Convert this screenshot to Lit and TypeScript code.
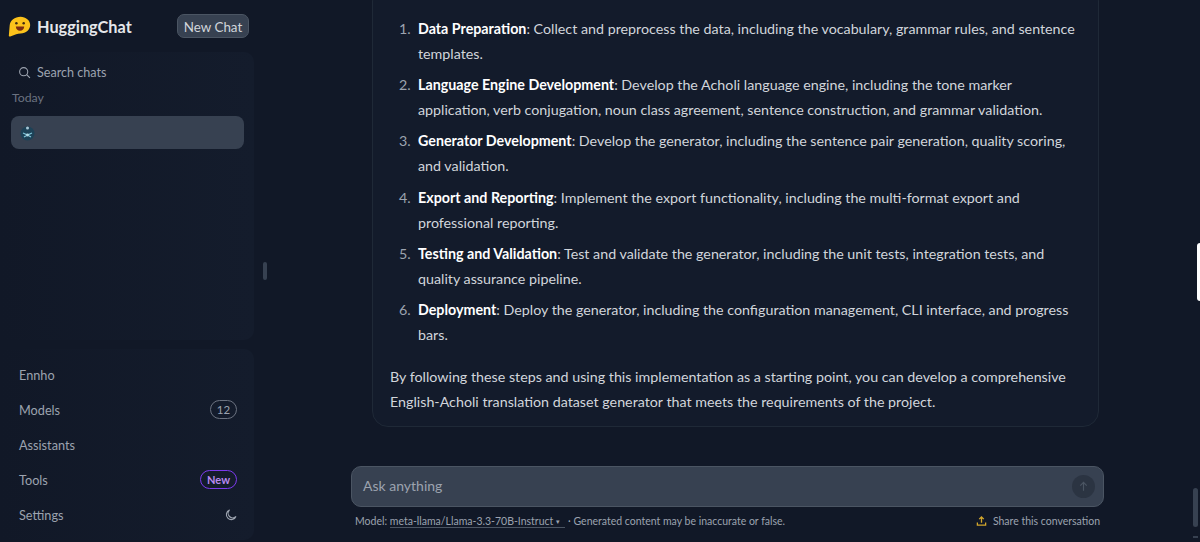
import { LitElement, html, css } from "lit";
import { customElement } from "lit/decorators.js";

const steps: [string, string][] = [
  ["Data Preparation", ": Collect and preprocess the data, including the vocabulary, grammar rules, and sentence templates."],
  ["Language Engine Development", ": Develop the Acholi language engine, including the tone marker application, verb conjugation, noun class agreement, sentence construction, and grammar validation."],
  ["Generator Development", ": Develop the generator, including the sentence pair generation, quality scoring, and validation."],
  ["Export and Reporting", ": Implement the export functionality, including the multi-format export and professional reporting."],
  ["Testing and Validation", ": Test and validate the generator, including the unit tests, integration tests, and quality assurance pipeline."],
  ["Deployment", ": Deploy the generator, including the configuration management, CLI interface, and progress bars."],
];

@customElement("app-root")
export class AppRoot extends LitElement {
  static styles = css`
    :host { display: block; width: 1200px; height: 542px; overflow: hidden; background: #111827; color: #d1d5db; font-family: "Lato", "Noto Sans", sans-serif; position: relative; }
    .app { display: grid; grid-template-columns: 263px 1fr; height: 542px; }
    .side { display: flex; flex-direction: column; padding: 0 9px 2px 0; min-width: 0; }
    .brand { height: 52px; display: flex; align-items: center; justify-content: space-between; padding: 0 5px 0 8px; flex: none; }
    .logo { display: flex; align-items: center; gap: 6px; font-size: 16.3px; font-weight: 700; color: #e5e7eb; }
    .newchat { background: #374151; border: 1px solid #4b5563; border-radius: 7px; color: #d1d5db; font-size: 13.4px; height: 24px; width: 72px; box-sizing: border-box; display: flex; align-items: center; justify-content: center; padding-top: 1px; }
    .panel { background: linear-gradient(90deg, #111827, #141c2c); border-radius: 10px; }
    .list { height: 288px; padding: 0 10px; flex: none; }
    .search { height: 40px; display: flex; align-items: center; gap: 6px; padding: 1px 0 0 8px; box-sizing: border-box; color: #9ca3af; font-size: 12.6px; }
    .today { font-size: 12.3px; color: #6b7280; height: 16px; line-height: 16px; margin: -2px 0 0 2px; }
    .chat { margin-top: 10px; margin-left: 1px; height: 33px; width: 233px; background: #374151; border-radius: 8px; display: flex; align-items: center; padding-left: 9px; box-sizing: border-box; }
    .nav { margin-top: 9px; flex: 1; padding: 8px 17px 5px 19px; display: flex; flex-direction: column; }
    .row { height: 35px; display: flex; align-items: center; justify-content: space-between; font-size: 12.7px; color: #9ca3af; }
    .count { border: 1px solid #6b7280; border-radius: 10px; height: 19px; width: 27px; box-sizing: border-box; display: flex; align-items: center; justify-content: center; font-size: 11.5px; color: #9ca3af; }
    .new { border: 1px solid #7c3aed; border-radius: 10px; height: 19px; width: 37px; box-sizing: border-box; display: flex; align-items: center; justify-content: center; font-size: 11px; font-weight: 700; color: #b88af0; }
    .main { display: flex; flex-direction: column; min-width: 0; }
    .scroll { height: 427px; overflow: hidden; display: flex; flex-direction: column; justify-content: flex-end; padding: 0 101px 0 109px; flex: none; }
    .msg { flex: none; border: 1px solid #1f2937; border-radius: 16px; background: #131b2b; padding: 30px 18px 0 17px; font-size: 14.27px; line-height: 25px; color: #d1d5db; }
    ol { margin: 0; padding: 0 0 0 28px; }
    li { margin: 0 0 6.2px; padding-left: 0; }
    li::marker { color: #9ca3af; content: counter(list-item) ".  "; }
    b { font-weight: 700; color: #fff; }
    p { margin: 17px 0 12px; }
    .input { margin: 39px 0 0 88px; width: 753px; height: 41px; box-sizing: border-box; background: #374151; border: 1px solid #4b5563; border-radius: 10px; display: flex; align-items: center; justify-content: space-between; padding: 0 8px 2px 11px; color: #9ca3af; font-size: 14px; flex: none; }
    .send { width: 23px; height: 23px; border-radius: 50%; background: #2b3442; display: flex; align-items: center; justify-content: center; margin-top: 2px; }
    .foot { margin: 7px 0 0 92px; width: 745px; display: flex; justify-content: space-between; align-items: center; font-size: 10.5px; color: #9ca3af; height: 14px; }
    .foot u { text-decoration: none; border-bottom: 1px solid #4b5563; }
    .caret { font-size: 7px; vertical-align: 1px; }
    .share { display: flex; align-items: center; gap: 6px; }
    .bar { position: absolute; right: 2px; top: 488px; width: 5px; height: 39px; border-radius: 3px; background: #374151; }
    .tick { position: absolute; right: 2px; top: 536px; width: 5px; height: 2px; background: #374151; }
    .edge { position: absolute; right: 0; top: 243px; width: 3px; height: 58px; background: #fff; border-radius: 3px 0 0 3px; }
    .grip { position: absolute; left: 263px; top: 262px; width: 4px; height: 18px; border-radius: 2px; background: #374151; }
  `;

  render() {
    return html`
      <div class="app">
        <aside class="side">
          <div class="brand">
            <div class="logo">
              <svg width="23" height="21" viewBox="0 0 22 20">
                <path d="M12 .6c5 0 9.200 3.400 9.200 8s-4 8-9.200 8c-1.600 0-3 .2-4.200.8L2.200 19.500c-.8.3-1.500-.2-1.400-1L1.600 9C1.900 4 6.500.6 12 .6z" fill="#fcc21b"/>
                <circle cx="8" cy="7" r="1.200" fill="#3f2a14"/><circle cx="15" cy="7" r="1.200" fill="#3f2a14"/>
                <path d="M7.500 10h8c0 2.600-1.700 4-4 4s-4-1.400-4-4z" fill="#7c2d12"/>
              </svg>
              HuggingChat
            </div>
            <div class="newchat">New Chat</div>
          </div>
          <div class="panel list">
            <div class="search">
              <svg width="13" height="13" viewBox="0 0 24 24" fill="none" stroke="#9ca3af" stroke-width="2"><circle cx="10.500" cy="10.500" r="7.500"/><path d="M16 16l6 6"/></svg>
              Search chats
            </div>
            <div class="today">Today</div>
            <div class="chat">
              <svg width="15" height="16" viewBox="0 0 15 16">
                <circle cx="7.500" cy="8.500" r="7" fill="#1d4257"/>
                <circle cx="7.500" cy="3" r="1.500" fill="#a9c7d6"/>
                <path d="M3 8l4.500 2L12 8M4 12l3.500-2 3.500 2" stroke="#7fc4d8" stroke-width="1.200" fill="none"/>
                <circle cx="7.500" cy="10" r="1.400" fill="#b4dbe6"/>
              </svg>
            </div>
          </div>
          <div class="panel nav">
            <div class="row">Ennho</div>
            <div class="row">Models<span class="count">12</span></div>
            <div class="row">Assistants</div>
            <div class="row">Tools<span class="new">New</span></div>
            <div class="row">Settings
              <svg width="12" height="12" viewBox="0 0 24 24" fill="none" stroke="#9ca3af" stroke-width="2.200"><path d="M9 2a10 10 0 1 0 13 13A9 9 0 0 1 9 2z"/></svg>
            </div>
          </div>
        </aside>
        <main class="main">
          <div class="scroll">
            <div class="msg">
              <ol>${steps.map(([h, t]) => html`<li><b>${h}</b>${t}</li>`)}</ol>
              <p>By following these steps and using this implementation as a starting point, you can develop a comprehensive English-Acholi translation dataset generator that meets the requirements of the project.</p>
            </div>
          </div>
          <div class="input">
            Ask anything
            <div class="send"><svg width="11" height="11" viewBox="0 0 24 24" fill="none" stroke="#4b5563" stroke-width="2.500"><path d="M12 21V4M5 10l7-7 7 7"/></svg></div>
          </div>
          <div class="foot">
            <span>Model: <u>meta-llama/Llama-3.3-70B-Instruct <span class="caret">▾</span>&nbsp;&nbsp;</u>&nbsp;· Generated content may be inaccurate or false.</span>
            <span class="share">
              <svg width="11" height="12" viewBox="0 0 24 24" fill="none" stroke="#d4a72c" stroke-width="2.800"><path d="M12 16V3M7 8l5-5 5 5M3 15v6h18v-6"/></svg>
              Share this conversation
            </span>
          </div>
        </main>
      </div>
      <div class="grip"></div>
      <div class="bar"></div>
      <div class="tick"></div>
      <div class="edge"></div>
    `;
  }
}
